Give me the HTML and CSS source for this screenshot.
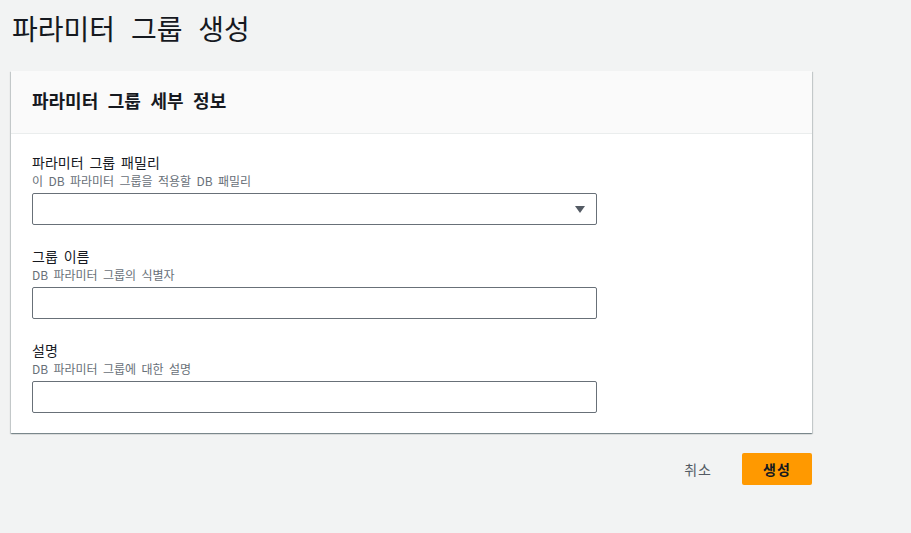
FILE: index.html
```html
<!DOCTYPE html>
<html lang="ko">
<head>
<meta charset="utf-8">
<title>파라미터 그룹 생성</title>
<link rel="stylesheet" href="styles.css">
</head>
<body>
<div class="page">
  <h1 class="title">파라미터 그룹 생성</h1>
  <section class="card">
    <div class="card-header"><h2>파라미터 그룹 세부 정보</h2></div>
    <div class="card-body">
      <div class="field">
        <label class="label">파라미터 그룹 패밀리</label>
        <div class="desc">이 DB 파라미터 그룹을 적용할 DB 패밀리</div>
        <div class="select">
          <svg class="caret" width="10" height="7" viewBox="0 0 10 7"><path d="M0 0h10L5 7z" fill="#545b64"/></svg>
        </div>
      </div>
      <div class="field">
        <label class="label">그룹 이름</label>
        <div class="desc">DB 파라미터 그룹의 식별자</div>
        <input class="input" type="text">
      </div>
      <div class="field">
        <label class="label">설명</label>
        <div class="desc">DB 파라미터 그룹에 대한 설명</div>
        <input class="input" type="text">
      </div>
    </div>
  </section>
  <div class="actions">
    <button class="btn btn-link">취소</button>
    <button class="btn btn-primary">생성</button>
  </div>
</div>
</body>
</html>
```

FILE: styles.css
```css
html, body {
  margin: 0;
  padding: 0;
  background: #f2f3f3;
  font-family: "Noto Sans CJK KR", "Noto Sans", sans-serif;
  color: #16191f;
}

.page {
  width: 801px;
  margin-left: 11px;
}

.title {
  margin: 0;
  padding-top: 8px;
  font-size: 28px;
  font-weight: 400;
  line-height: 40px;
  height: 63px;
  padding-left: 1px;
  word-spacing: 8px;
}

.card {
  background: #fff;
  box-shadow: 0 1px 1px 0 rgba(0, 28, 36, 0.3), 1px 1px 1px 0 rgba(0, 28, 36, 0.15), -1px 1px 1px 0 rgba(0, 28, 36, 0.15);
}

.card-header {
  background: #fafafa;
  border-bottom: 1px solid #eaeded;
  padding: 0 21px 4px;
  box-sizing: border-box;
  height: 63px;
  display: flex;
  align-items: center;
}

.card-header h2 {
  margin: 0;
  font-size: 18px;
  font-weight: 700;
  line-height: 24px;
  word-spacing: 4.5px;
}

.card-body {
  padding: 18px 21px 20px;
  display: flex;
  flex-direction: column;
  gap: 21px;
}

.field {
  display: flex;
  flex-direction: column;
}

.label {
  font-size: 14px;
  line-height: 20px;
  word-spacing: 2px;
}

.desc {
  font-size: 12px;
  line-height: 17px;
  color: #687078;
  margin-bottom: 4px;
  word-spacing: 2px;
}

.select, .input {
  box-sizing: border-box;
  width: 565px;
  height: 32px;
  border: 1px solid #687078;
  border-radius: 2px;
  background: #fff;
}

.input {
  margin: 0;
  padding: 4px 10px;
  font: inherit;
  display: block;
}

.select {
  display: flex;
  align-items: center;
  justify-content: flex-end;
  padding-right: 11px;
}

.actions {
  display: flex;
  justify-content: flex-end;
  align-items: center;
  gap: 10px;
  margin-top: 20px;
}

.btn {
  font-family: inherit;
  font-size: 14px;
  height: 32px;
  border: 0;
  border-radius: 2px;
  background: transparent;
  padding: 0 20px;
  line-height: 32px;
}

.btn-link {
  color: #545b64;
  font-weight: 400;
  letter-spacing: 1px;
}

.btn-primary {
  width: 70px;
  padding: 0;
  background: #ff9900;
  color: #16191f;
  font-weight: 700;
  letter-spacing: 1px;
}
```
